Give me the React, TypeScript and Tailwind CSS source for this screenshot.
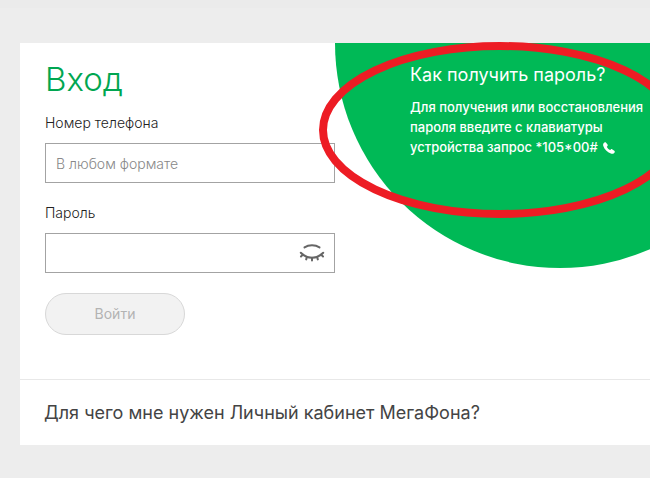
import React, { useState } from 'react';

interface FieldProps {
  id: string;
  label: string;
  type: string;
  placeholder?: string;
  children?: React.ReactNode;
}

const ClosedEyeIcon: React.FC = () => (
  <svg
    className="h-5 w-7"
    viewBox="0 0 28 20"
    fill="none"
    stroke="#666666"
    strokeWidth="2"
    strokeLinecap="round"
  >
    <path d="M6.500 4.400C8.800 2.900 11 2.300 14 2.300s5.200.6 7.500 2.100" />
    <path d="M2.800 9.800c3.200 3.400 6.700 4.900 11.200 4.900s8-1.500 11.200-4.900" />
    <path d="M4.900 11.600 3 13.500M9 13.900 8.200 16.400M14 14.700V17.400M19 13.900l.8 2.500M23.100 11.600l1.900 1.900" />
  </svg>
);

const PhoneIcon: React.FC = () => (
  <svg className="ml-0.5 inline-block h-3 w-3" viewBox="0 0 12 12" fill="white">
    <path d="M.6 1.200C1.300.2 2.400-.1 3.100.7L4.500 2.600c.4.600.3 1.100-.2 1.600l-.5.5c.6 1.400 1.800 2.600 3.400 3.400l.6-.6c.5-.5 1-.5 1.600-.1l1.900 1.300c.8.600.6 1.500-.2 2.300-.8.900-2 1.100-3.300.6C4.300 10.300 1.500 7.400.3 4 0 3 0 2 .6 1.200z" />
  </svg>
);

const Field: React.FC<FieldProps> = ({ id, label, type, placeholder, children }) => (
  <div className="flex flex-col gap-2.5">
    <label htmlFor={id} className="text-sm leading-5 font-light text-[#222222]">
      {label}
    </label>
    <div className="flex h-10 items-center border border-[#a3a3a3] bg-white pr-2">
      <input
        id={id}
        type={type}
        placeholder={placeholder}
        className="h-full min-w-0 flex-1 bg-transparent px-2.5 text-sm font-light text-[#333333] outline-none placeholder:text-[#888888]"
      />
      {children}
    </div>
  </div>
);

const LoginForm: React.FC = () => {
  const [visible, setVisible] = useState(false);

  return (
    <form className="w-[315px] shrink-0 pt-4 pb-11 pl-[25px]" onSubmit={(e) => e.preventDefault()}>
      <h1 className="text-[33px] leading-10 font-light text-[#00a651]">Вход</h1>
      <div className="mt-3.5 flex flex-col gap-5">
        <Field id="phone" label="Номер телефона" type="tel" placeholder="В любом формате" />
        <Field id="password" label="Пароль" type={visible ? 'text' : 'password'}>
          <button type="button" aria-label="Показать пароль" onClick={() => setVisible(!visible)}>
            <ClosedEyeIcon />
          </button>
        </Field>
      </div>
      <button
        type="submit"
        disabled
        className="mt-5 h-[42px] w-[140px] rounded-full border border-[#d8d8d8] bg-[#f2f2f2] text-sm text-[#b3b3b3]"
      >
        Войти
      </button>
    </form>
  );
};

const PasswordHelp: React.FC = () => (
  <aside className="h-[225px] w-[450px] shrink-0 rounded-b-[225px] bg-[#00b956] pt-5 pl-[75px] text-white">
    <h2 className="text-lg leading-6">Как получить пароль?</h2>
    <p className="mt-2.5 w-[240px] text-[13px] leading-5 font-medium">
      Для получения или восстановления
      <br />
      пароля введите с клавиатуры
      <br />
      устройства запрос *105*00# <PhoneIcon />
    </p>
  </aside>
);

export default function App() {
  return (
    <div className="min-h-screen overflow-hidden bg-[#ededed] font-['Inter','Liberation_Sans',sans-serif]">
      <div className="h-2 bg-[#ebebeb]" />
      <main className="relative mt-[35px] ml-5">
        <div className="overflow-hidden bg-white">
          <section className="flex items-start">
            <LoginForm />
            <PasswordHelp />
          </section>
          <section className="border-t border-[#e8e8e8] px-6 pt-[21px] pb-5">
            <h2 className="text-lg leading-6 text-[#444444]">
              Для чего мне нужен Личный кабинет МегаФона?
            </h2>
          </section>
        </div>
        {/* red highlight around the password hint */}
        <svg
          className="pointer-events-none absolute -top-1 left-[295px] h-[184px] w-[370px]"
          viewBox="0 0 370 184"
          fill="none"
        >
          <ellipse cx="185" cy="91" rx="177" ry="84" stroke="#ed1c24" strokeWidth="8" />
        </svg>
      </main>
    </div>
  );
}
